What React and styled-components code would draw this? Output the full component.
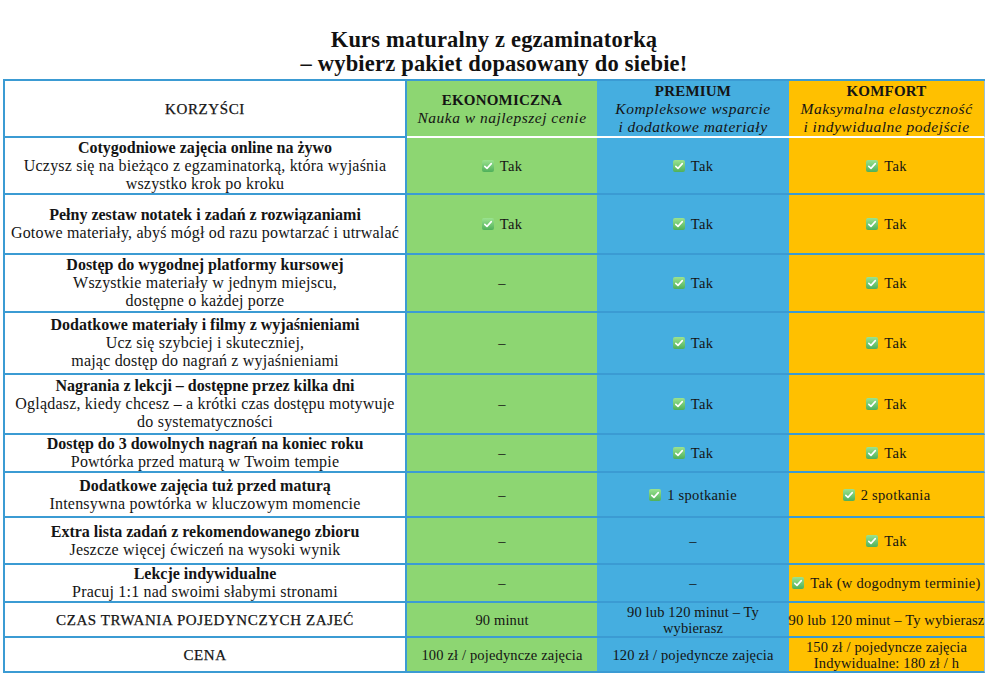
import React from "react";
import styled, { createGlobalStyle } from "styled-components";

const GlobalStyle = createGlobalStyle`
  html, body {
    margin: 0;
    padding: 0;
    background: #ffffff;
  }
  body {
    font-family: "Liberation Serif", "Times New Roman", serif;
    color: #141414;
  }
`;

const GREEN = "#8dd672";
const BLUE = "#45aee0";
const ORANGE = "#ffc000";
const LINE = "#3b9bd3";

const Page = styled.div`
  width: 988px;
  height: 685px;
  padding: 28px 3px 0 3px;
  box-sizing: border-box;
`;

const Title = styled.h1`
  margin: 0 0 3px 0;
  text-align: center;
  font-size: 22.5px;
  line-height: 24px;
  letter-spacing: 0.2px;
  font-weight: bold;
  color: #111;
`;

const Table = styled.div`
  width: 982px;
  border-top: 2px solid ${LINE};
  border-left: 2px solid ${LINE};
  box-sizing: border-box;
`;

const Row = styled.div`
  display: grid;
  grid-template-columns: 402px 190px 192px 196px;
  grid-template-rows: ${(p) => p.$h}px;
`;

const FeatureCell = styled.div`
  display: flex;
  flex-direction: column;
  justify-content: center;
  align-items: center;
  text-align: center;
  background: #ffffff;
  border-right: 2px solid ${LINE};
  border-bottom: 2px solid ${LINE};
  font-size: 16px;
  line-height: 18px;
  letter-spacing: 0.2px;
  white-space: nowrap;
`;

const FeatureTitle = styled.div`
  font-weight: bold;
  font-size: 16px;
  letter-spacing: 0;
`;

const FeatureLabel = styled.div`
  font-size: 15px;
  letter-spacing: 0.6px;
  -webkit-text-stroke: 0.25px #141414;
`;

const PlanCell = styled.div`
  display: flex;
  flex-direction: column;
  justify-content: center;
  align-items: center;
  text-align: center;
  background: ${(p) => p.$bg};
  border-bottom: 2px solid ${(p) => (p.$head ? "#ffffff" : LINE)};
  border-right: ${(p) => (p.$last ? "1px solid #9bbfd4" : "none")};
  font-size: 14.5px;
  line-height: ${(p) => (p.$compact ? "16px" : "18px")};
  letter-spacing: ${(p) => (p.$compact ? "0.15px" : "0.3px")};
  white-space: nowrap;
`;

const PlanName = styled.div`
  font-size: 15px;
  font-weight: bold;
  letter-spacing: 0.2px;
`;

const PlanSub = styled.div`
  font-style: italic;
  font-size: 15.5px;
  letter-spacing: 0.5px;
`;

const Value = styled.span`
  display: inline-flex;
  align-items: center;
  gap: 6px;
`;

const CheckIcon = () => (
  <svg width="12" height="12" viewBox="0 0 12 12" aria-hidden="true">
    <defs>
      <linearGradient id="chk" x1="0" y1="0" x2="0" y2="1">
        <stop offset="0" stopColor="#9be38f" />
        <stop offset="1" stopColor="#4fb05a" />
      </linearGradient>
    </defs>
    <rect x="0" y="0" width="12" height="12" rx="2" fill="url(#chk)" />
    <path d="M2.8 6.3 L5 8.4 L9.3 3.6" fill="none" stroke="#ffffff" strokeWidth="1.6" strokeLinecap="round" strokeLinejoin="round" />
  </svg>
);

const Yes = ({ text = "Tak" }) => (
  <Value>
    <CheckIcon />
    {text}
  </Value>
);

const rows = [
  {
    h: 57,
    title: "Cotygodniowe zajęcia online na żywo",
    desc: ["Uczysz się na bieżąco z egzaminatorką, która wyjaśnia", "wszystko krok po kroku"],
    cells: ["yes", "yes", "yes"],
  },
  {
    h: 60,
    title: "Pełny zestaw notatek i zadań z rozwiązaniami",
    desc: ["Gotowe materiały, abyś mógł od razu powtarzać i utrwalać"],
    cells: ["yes", "yes", "yes"],
  },
  {
    h: 58,
    title: "Dostęp do wygodnej platformy kursowej",
    desc: ["Wszystkie materiały w jednym miejscu,", "dostępne o każdej porze"],
    cells: ["–", "yes", "yes"],
  },
  {
    h: 62,
    title: "Dodatkowe materiały i filmy z wyjaśnieniami",
    desc: ["Ucz się szybciej i skuteczniej,", "mając dostęp do nagrań z wyjaśnieniami"],
    cells: ["–", "yes", "yes"],
  },
  {
    h: 60,
    title: "Nagrania z lekcji – dostępne przez kilka dni",
    desc: ["Oglądasz, kiedy chcesz – a krótki czas dostępu motywuje", "do systematyczności"],
    cells: ["–", "yes", "yes"],
  },
  {
    h: 38,
    title: "Dostęp do 3 dowolnych nagrań na koniec roku",
    desc: ["Powtórka przed maturą w Twoim tempie"],
    cells: ["–", "yes", "yes"],
  },
  {
    h: 45,
    title: "Dodatkowe zajęcia tuż przed maturą",
    desc: ["Intensywna powtórka w kluczowym momencie"],
    cells: ["–", { yes: "1 spotkanie" }, { yes: "2 spotkania" }],
  },
  {
    h: 47,
    title: "Extra lista zadań z rekomendowanego zbioru",
    desc: ["Jeszcze więcej ćwiczeń na wysoki wynik"],
    cells: ["–", "–", "yes"],
  },
  {
    h: 38,
    title: "Lekcje indywidualne",
    desc: ["Pracuj 1:1 nad swoimi słabymi stronami"],
    cells: ["–", "–", { yes: "Tak (w dogodnym terminie)" }],
  },
];

const plans = [
  { bg: GREEN, name: "EKONOMICZNA", sub: ["Nauka w najlepszej cenie"] },
  { bg: BLUE, name: "PREMIUM", sub: ["Kompleksowe wsparcie", "i dodatkowe materiały"] },
  { bg: ORANGE, name: "KOMFORT", sub: ["Maksymalna elastyczność", "i indywidualne podejście"] },
];

const summary = [
  {
    h: 35,
    label: "CZAS TRWANIA POJEDYNCZYCH ZAJEĆ",
    cells: [["90 minut"], ["90 lub 120 minut – Ty", "wybierasz"], ["90 lub 120 minut – Ty wybierasz"]],
  },
  {
    h: 35,
    label: "CENA",
    cells: [
      ["100 zł / pojedyncze zajęcia"],
      ["120 zł / pojedyncze zajęcia"],
      ["150 zł / pojedyncze zajęcia", "Indywidualne: 180 zł / h"],
    ],
  },
];

function renderValue(v) {
  if (v === "yes") return <Yes />;
  if (typeof v === "object") return <Yes text={v.yes} />;
  return v;
}

export default function App() {
  return (
    <Page>
      <GlobalStyle />
      <Title>
        Kurs maturalny z egzaminatorką
        <br />– wybierz pakiet dopasowany do siebie!
      </Title>
      <Table>
        <Row $h={57}>
          <FeatureCell>
            <FeatureLabel>KORZYŚCI</FeatureLabel>
          </FeatureCell>
          {plans.map((p, i) => (
            <PlanCell key={p.name} $bg={p.bg} $head $last={i === 2}>
              <PlanName>{p.name}</PlanName>
              {p.sub.map((s) => (
                <PlanSub key={s}>{s}</PlanSub>
              ))}
            </PlanCell>
          ))}
        </Row>
        {rows.map((r) => (
          <Row key={r.title} $h={r.h}>
            <FeatureCell>
              <FeatureTitle>{r.title}</FeatureTitle>
              {r.desc.map((d) => (
                <div key={d}>{d}</div>
              ))}
            </FeatureCell>
            {r.cells.map((c, i) => (
              <PlanCell key={i} $bg={plans[i].bg} $last={i === 2}>
                {renderValue(c)}
              </PlanCell>
            ))}
          </Row>
        ))}
        {summary.map((s) => (
          <Row key={s.label} $h={s.h}>
            <FeatureCell>
              <FeatureLabel>{s.label}</FeatureLabel>
            </FeatureCell>
            {s.cells.map((lines, i) => (
              <PlanCell key={i} $bg={plans[i].bg} $last={i === 2} $compact>
                {lines.map((l) => (
                  <div key={l}>{l}</div>
                ))}
              </PlanCell>
            ))}
          </Row>
        ))}
      </Table>
    </Page>
  );
}
